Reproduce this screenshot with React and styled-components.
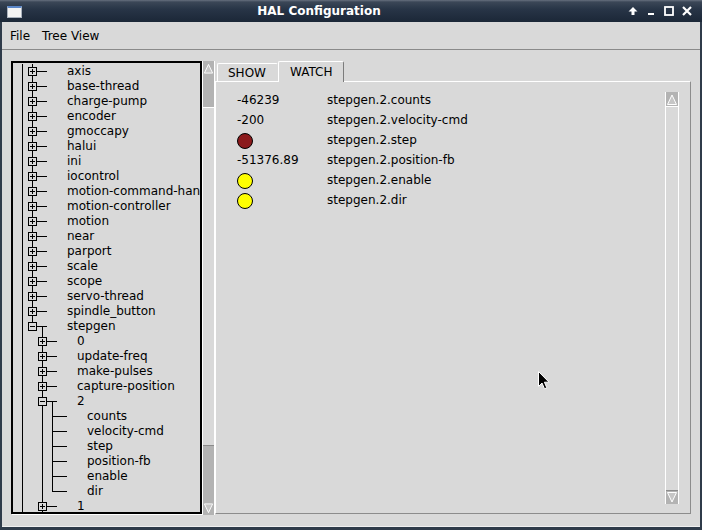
import React from 'react'
import styled, { createGlobalStyle } from 'styled-components'

const GlobalStyle = createGlobalStyle`
  html, body {
    margin: 0;
    padding: 0;
    background: #d9d9d9;
  }
  body {
    font-family: "DejaVu Sans", "Liberation Sans", sans-serif;
    font-size: 12px;
    color: #000;
  }
  #root {
    width: 702px;
    height: 530px;
  }
`

const treeItems = [
  { name: 'axis', level: 0, kids: 'closed', next: true },
  { name: 'base-thread', level: 0, kids: 'closed', next: true },
  { name: 'charge-pump', level: 0, kids: 'closed', next: true },
  { name: 'encoder', level: 0, kids: 'closed', next: true },
  { name: 'gmoccapy', level: 0, kids: 'closed', next: true },
  { name: 'halui', level: 0, kids: 'closed', next: true },
  { name: 'ini', level: 0, kids: 'closed', next: true },
  { name: 'iocontrol', level: 0, kids: 'closed', next: true },
  { name: 'motion-command-handler', level: 0, kids: 'closed', next: true },
  { name: 'motion-controller', level: 0, kids: 'closed', next: true },
  { name: 'motion', level: 0, kids: 'closed', next: true },
  { name: 'near', level: 0, kids: 'closed', next: true },
  { name: 'parport', level: 0, kids: 'closed', next: true },
  { name: 'scale', level: 0, kids: 'closed', next: true },
  { name: 'scope', level: 0, kids: 'closed', next: true },
  { name: 'servo-thread', level: 0, kids: 'closed', next: true },
  { name: 'spindle_button', level: 0, kids: 'closed', next: true },
  { name: 'stepgen', level: 0, kids: 'open', next: false },
  { name: '0', level: 1, kids: 'closed', next: true },
  { name: 'update-freq', level: 1, kids: 'closed', next: true },
  { name: 'make-pulses', level: 1, kids: 'closed', next: true },
  { name: 'capture-position', level: 1, kids: 'closed', next: true },
  { name: '2', level: 1, kids: 'open', next: true },
  { name: 'counts', level: 2, next: true },
  { name: 'velocity-cmd', level: 2, next: true },
  { name: 'step', level: 2, next: true },
  { name: 'position-fb', level: 2, next: true },
  { name: 'enable', level: 2, next: true },
  { name: 'dir', level: 2, next: false },
  { name: '1', level: 1, kids: 'closed', next: true },
]

// which ancestor levels still have siblings below them
function withAncestors(items) {
  const stack = []
  return items.map(item => {
    const ancestors = stack.slice(0, item.level)
    stack[item.level] = item.next
    stack.length = item.level + 1
    return { ...item, ancestors }
  })
}

const watchItems = [
  { value: '-46239', name: 'stepgen.2.counts' },
  { value: '-200', name: 'stepgen.2.velocity-cmd' },
  { led: '#8b1a1c', name: 'stepgen.2.step' },
  { value: '-51376.89', name: 'stepgen.2.position-fb' },
  { led: '#ffff00', name: 'stepgen.2.enable' },
  { led: '#ffff00', name: 'stepgen.2.dir' },
]

export default function App() {
  const rows = withAncestors(treeItems)

  return (
    <Window>
      <GlobalStyle />
      <TitleBar>
        <WinIcon />
        <Title>HAL Configuration</Title>
        <TitleButtons>
          <TitleButton>
            <svg width="10" height="10" viewBox="0 0 10 10">
              <polygon points="5,1 9.5,5.5 6.5,5.5 6.5,9 3.5,9 3.5,5.5 0.5,5.5" fill="#fff" />
            </svg>
          </TitleButton>
          <TitleButton>
            <svg width="10" height="10" viewBox="0 0 10 10">
              <rect x="2" y="7" width="6" height="2" fill="#fff" />
            </svg>
          </TitleButton>
          <TitleButton>
            <svg width="10" height="10" viewBox="0 0 10 10">
              <rect x="1" y="1" width="8" height="8" fill="none" stroke="#fff" strokeWidth="1.8" />
            </svg>
          </TitleButton>
          <TitleButton>
            <svg width="10" height="10" viewBox="0 0 10 10">
              <path d="M1,1 L9,9 M9,1 L1,9" stroke="#fff" strokeWidth="2.2" />
            </svg>
          </TitleButton>
        </TitleButtons>
      </TitleBar>

      <Frame>
        <MenuBar>
          <MenuItem>File</MenuItem>
          <MenuItem>Tree View</MenuItem>
        </MenuBar>

        <Main>
          <TreeBox>
            {rows.map((row, i) => (
              <TreeRow key={row.name + i}>
                <Guides row={row} />
                <TreeLabel>{row.name}</TreeLabel>
              </TreeRow>
            ))}
          </TreeBox>

          <ScrollBar $width={13} $height={454}>
            <Arrow dir="up" />
            <Trough>
              <TroughGap $size={32} />
              <Slider $size={339} />
              <TroughGap $grow />
            </Trough>
            <Arrow dir="down" />
          </ScrollBar>

          <Notebook>
            <TabRow>
              <Tab>SHOW</Tab>
              <Tab $active>WATCH</Tab>
            </TabRow>
            <Page>
              <WatchList>
                {watchItems.map(item => (
                  <WatchRow key={item.name}>
                    <WatchValue>
                      {item.led ? <Led $color={item.led} /> : item.value}
                    </WatchValue>
                    <WatchName>{item.name}</WatchName>
                  </WatchRow>
                ))}
              </WatchList>
              <PageScroll>
                <ScrollBar $width={14} $height={412}>
                  <Arrow dir="up" />
                  <Trough>
                    <Slider $grow />
                  </Trough>
                  <Arrow dir="down" />
                </ScrollBar>
              </PageScroll>
              <Cursor width="12" height="19" viewBox="0 0 12 19">
                <path
                  d="M0.5,0.5 L0.5,15.5 L4,12 L6.5,17.8 L8.8,16.8 L6.4,11.2 L11,11.2 Z"
                  fill="#000"
                  stroke="#fff"
                  strokeWidth="1"
                />
              </Cursor>
            </Page>
          </Notebook>
        </Main>
      </Frame>
    </Window>
  )
}

function Guides({ row }) {
  const c = 19 + row.level * 10
  const w = 54 + row.level * 10
  const box = !!row.kids
  return (
    <svg width={w} height={15} style={{ flex: 'none' }} stroke="#000" strokeWidth="1" shapeRendering="crispEdges">
      <line x1={9.5} y1={0} x2={9.5} y2={15} />
      {row.ancestors.map((on, k) => on && (
        <line key={k} x1={19 + 10 * k + 0.5} y1={0} x2={19 + 10 * k + 0.5} y2={15} />
      ))}
      <line x1={c + 0.5} y1={0} x2={c + 0.5} y2={box ? 3 : 8} />
      {row.next && <line x1={c + 0.5} y1={box ? 12 : 7} x2={c + 0.5} y2={15} />}
      <line x1={box ? c + 5 : c} y1={7.5} x2={c + 15} y2={7.5} />
      {row.kids === 'open' && <line x1={c + 10.5} y1={7} x2={c + 10.5} y2={15} />}
      {box && <rect x={c - 3.5} y={3.5} width={8} height={8} fill="#d9d9d9" />}
      {box && <line x1={c - 2} y1={7.5} x2={c + 3} y2={7.5} />}
      {row.kids === 'closed' && <line x1={c + 0.5} y1={5} x2={c + 0.5} y2={10} />}
    </svg>
  )
}

function Arrow({ dir }) {
  const pts = dir === 'up' ? '1.5,11.5 6,2 10.5,11.5' : '1.5,1.5 6,11 10.5,1.5'
  return (
    <ArrowBox>
      <svg width="12" height="13" viewBox="0 0 12 13">
        <polygon points={pts} fill="#c6c6c6" stroke="#fff" strokeWidth="1" />
      </svg>
    </ArrowBox>
  )
}

const Window = styled.div`
  width: 702px;
  height: 530px;
  display: flex;
  flex-direction: column;
  overflow: hidden;
`

const TitleBar = styled.div`
  height: 22px;
  flex: none;
  display: flex;
  align-items: center;
  background: linear-gradient(#66707e 0, #3b4757 2px, #283547 9px, #1b2737 100%);
  color: #fff;
  font-weight: bold;
  font-size: 12px;
`

const WinIcon = styled.div`
  width: 13px;
  height: 9px;
  margin-left: 7px;
  margin-top: 1px;
  background: #f4f4f4;
  border: 1px solid #aab2bd;
  border-top: 2px solid #5b87c9;
`

const Title = styled.div`
  flex: 1;
  text-align: center;
  padding-right: 8px;
`

const TitleButtons = styled.div`
  display: flex;
  padding-right: 6px;
`

const TitleButton = styled.div`
  width: 18px;
  height: 18px;
  display: flex;
  align-items: center;
  justify-content: center;
`

const Frame = styled.div`
  flex: 1;
  display: flex;
  flex-direction: column;
  background: #d9d9d9;
  border-style: solid;
  border-color: #2f3b4a;
  border-width: 0 2px 3px 2px;
  box-shadow: inset 0 -1px 0 #f0f0f0;
`

const MenuBar = styled.div`
  height: 27px;
  flex: none;
  display: flex;
  align-items: center;
  gap: 12px;
  padding-left: 8px;
  border-bottom: 1px solid #8a8a8a;
`

const MenuItem = styled.span`
  font-size: 12px;
`

const Main = styled.div`
  flex: 1;
  display: flex;
  align-items: flex-start;
  padding: 11px 0 0 9px;
`

const TreeBox = styled.div`
  width: 191px;
  height: 453px;
  box-sizing: border-box;
  flex: none;
  padding-top: 1px;
  border: 2px solid #000;
  box-shadow: 1px 1px 0 #fff;
  overflow: hidden;
`

const TreeRow = styled.div`
  height: 15px;
  display: flex;
  align-items: center;
`

const TreeLabel = styled.span`
  white-space: nowrap;
  line-height: 15px;
  font-size: 12px;
`

const ScrollBar = styled.div`
  width: ${p => p.$width}px;
  height: ${p => p.$height}px;
  box-sizing: border-box;
  flex: none;
  display: flex;
  flex-direction: column;
  padding-top: 1px;
  background: #b3b3b3;
  border-left: 1px solid #fff;
  border-right: 1px solid #fff;
`

const ArrowBox = styled.div`
  height: 13px;
  flex: none;
  display: flex;
  justify-content: center;
  background: #b3b3b3;
`

const Trough = styled.div`
  flex: 1;
  display: flex;
  flex-direction: column;
`

const TroughGap = styled.div`
  flex: ${p => (p.$grow ? '1' : `0 0 ${p.$size}px`)};
`

const Slider = styled.div`
  flex: ${p => (p.$grow ? '1' : `0 0 ${p.$size}px`)};
  box-sizing: border-box;
  background: #d9d9d9;
  border-top: 1px solid #fff;
  border-bottom: 1px solid #8c8c8c;
`

const Notebook = styled.div`
  width: 476px;
  flex: none;
  display: flex;
  flex-direction: column;
`

const TabRow = styled.div`
  height: 20px;
  display: flex;
  align-items: flex-end;
  padding-left: 2px;
`

const Tab = styled.div`
  position: relative;
  z-index: ${p => (p.$active ? 1 : 0)};
  height: ${p => (p.$active ? 21 : 18)}px;
  margin-bottom: ${p => (p.$active ? -1 : 0)}px;
  box-sizing: border-box;
  padding: ${p => (p.$active ? '0 11px' : '0 11px 0 10px')};
  display: flex;
  align-items: center;
  background: #d9d9d9;
  border-top: 1px solid #fff;
  border-left: 1px solid #fff;
  border-right: 1px solid ${p => (p.$active ? '#7c7c7c' : '#d9d9d9')};
  border-radius: 2px 2px 0 0;
  font-size: 12px;
  padding-bottom: ${p => (p.$active ? 1 : 0)}px;
`

const Page = styled.div`
  position: relative;
  height: 433px;
  box-sizing: border-box;
  display: flex;
  border-top: 1px solid #fff;
  border-left: 1px solid #fff;
  border-right: 1px solid #8c8c8c;
  border-bottom: 1px solid #8c8c8c;
`

const WatchList = styled.div`
  flex: 1;
  padding: 8px 0 0 21px;
`

const WatchRow = styled.div`
  height: 20px;
  display: flex;
  align-items: center;
  font-size: 12px;
`

const WatchValue = styled.div`
  width: 90px;
  display: flex;
  align-items: center;
`

const WatchName = styled.div`
  white-space: nowrap;
`

const Led = styled.div`
  width: 14px;
  height: 14px;
  border-radius: 50%;
  border: 1px solid #000;
  background: ${p => p.$color};
  margin-top: 1px;
`

const PageScroll = styled.div`
  padding: 10px 11px 0 0;
`

const Cursor = styled.svg`
  position: absolute;
  left: 322px;
  top: 289px;
`
